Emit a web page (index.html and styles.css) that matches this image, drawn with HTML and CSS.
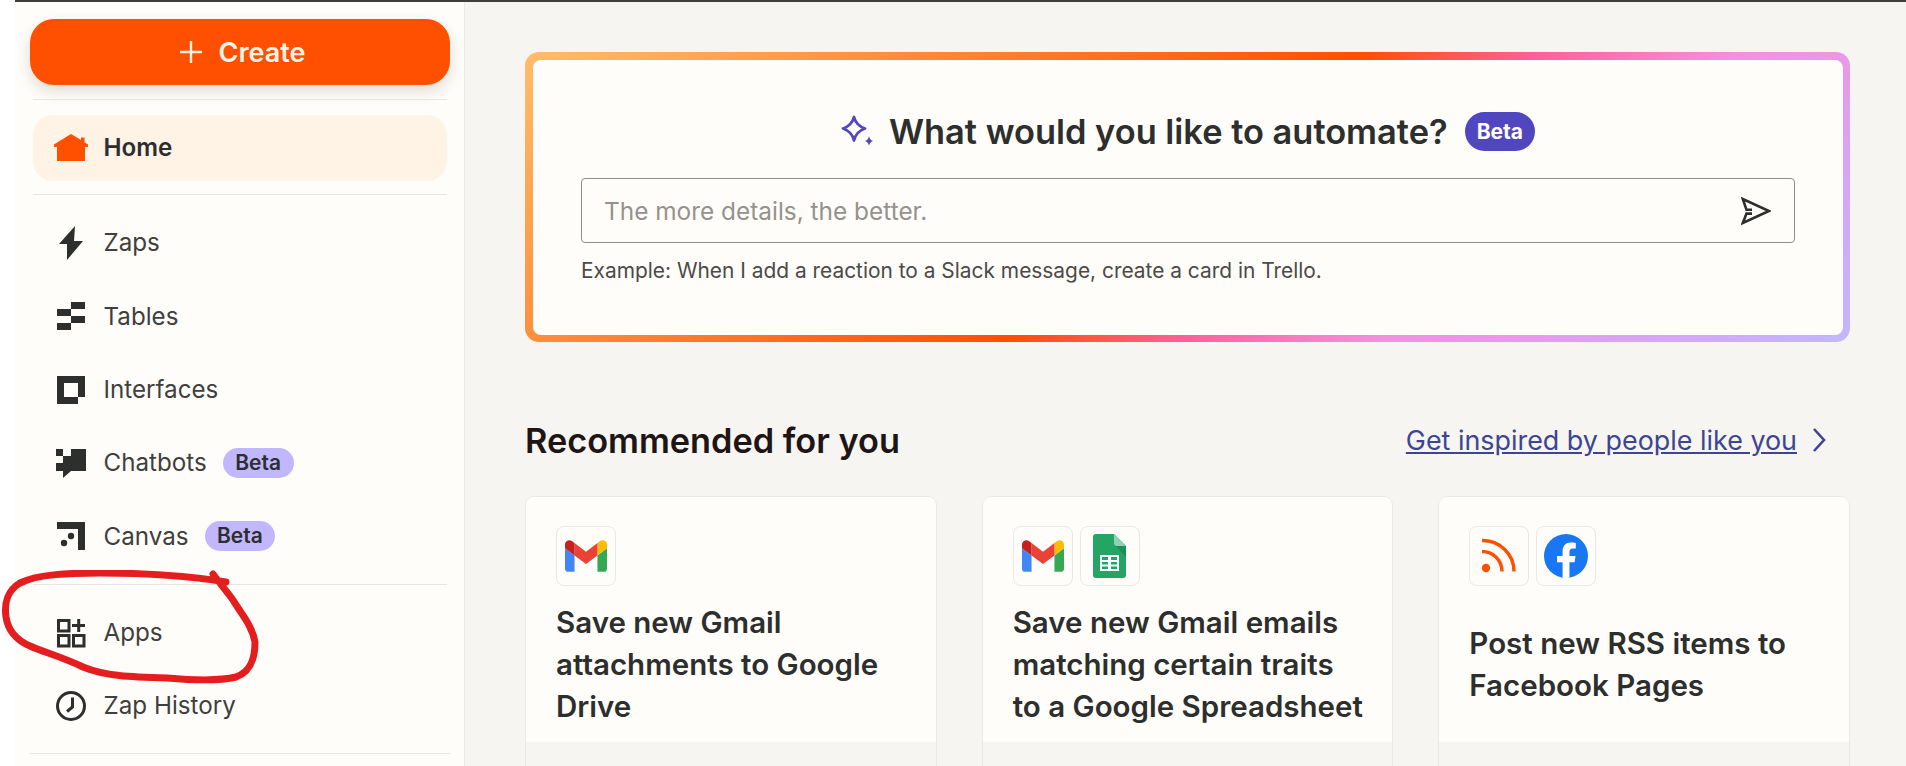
FILE: index.html

```html
<!DOCTYPE html>
<html lang="en">
<head>
  <meta charset="UTF-8">
  <title>Home - Zapier</title>
  <link rel="stylesheet" href="styles.css">
</head>
<body>
  <div class="topline"></div>
  <div class="app">
    <aside class="sidebar">
      <button class="create">
        <svg width="22" height="22" viewBox="0 0 22 22"><path d="M11 0V22M0 11H22" stroke="#fff3e6" stroke-width="2.4" fill="none"/></svg>
        <span>Create</span>
      </button>
      <div class="rule rule-create"></div>
      <a class="nav-item active">
        <svg class="nav-icon" viewBox="0 0 36 36"><path fill="#ff4f00" d="M18 4L28 10V7.5H31.5V12.2L35 14.6V17H32V31H4V17H1V14.6Z"/></svg>
        <span>Home</span>
      </a>
      <div class="rule rule-home"></div>
      <nav class="nav-group">
        <a class="nav-item">
          <svg class="nav-icon" viewBox="0 0 36 36"><path fill="#2d2e2e" d="M22 1L6 19H14L14 35L30 16H21Z"/></svg>
          <span>Zaps</span>
        </a>
        <a class="nav-item">
          <svg class="nav-icon" viewBox="0 0 36 36"><path fill="#2d2e2e" d="M18 4H32V11H18ZM4 11H18V18H4ZM18 18H32V25H18ZM4 25H18V32H4Z"/></svg>
          <span>Tables</span>
        </a>
        <a class="nav-item">
          <svg class="nav-icon" viewBox="0 0 36 36"><path fill="#2d2e2e" fill-rule="evenodd" d="M4 4H32V25H25V32H4ZM11 11V25H25V11Z"/></svg>
          <span>Interfaces</span>
        </a>
        <a class="nav-item">
          <svg class="nav-icon" viewBox="0 0 36 36"><path fill="#2d2e2e" d="M3 4H10V11H3ZM18 4H33V26H18L10 33V26H3V18H10V11H18Z"/></svg>
          <span>Chatbots</span>
          <em class="tag">Beta</em>
        </a>
        <a class="nav-item">
          <svg class="nav-icon" viewBox="0 0 36 36"><path fill="#2d2e2e" d="M4 4H32V32H25V11H4Z"/><circle cx="18" cy="18" r="3.2" fill="#2d2e2e"/><circle cx="11" cy="25" r="3.2" fill="#2d2e2e"/></svg>
          <span>Canvas</span>
          <em class="tag">Beta</em>
        </a>
      </nav>
      <div class="rule rule-canvas"></div>
      <nav class="nav-group">
        <a class="nav-item">
          <svg class="nav-icon" viewBox="0 0 36 36"><path fill="none" stroke="#2d2e2e" stroke-width="3" d="M5.5 5.5H16V16H5.5ZM5.5 20.5H16V31H5.5ZM20.5 20.5H31V31H20.5ZM25.7 4V17M19 10.5H32"/></svg>
          <span>Apps</span>
        </a>
        <a class="nav-item">
          <svg class="nav-icon" viewBox="0 0 36 36"><circle cx="18" cy="18" r="13.5" fill="none" stroke="#2d2e2e" stroke-width="3"/><path fill="none" stroke="#2d2e2e" stroke-width="3" d="M19.5 9.5V19L14 23.5"/></svg>
          <span>Zap History</span>
        </a>
      </nav>
      <div class="rule rule-bottom"></div>
    </aside>

    <main class="main">
      <section class="hero">
        <div class="hero-inner">
          <div class="hero-title">
            <svg class="sparkle" width="32" height="32" viewBox="0 0 32 32">
              <path fill="none" stroke="#5046c0" stroke-width="2.8" stroke-linejoin="round" d="M13 2C14.5 8 18 11.5 24 13.5C18 15.5 14.5 19 13 25.5C11.5 19 8 15.5 2 13.5C8 11.5 11.5 8 13 2Z"/>
              <path fill="#5046c0" d="M28 21C28.7 24 29.5 25 32 26C29.5 27 28.7 28 28 31C27.3 28 26.5 27 24 26C26.5 25 27.3 24 28 21Z"/>
            </svg>
            <h1>What would you like to automate?</h1>
            <span class="tag-dark">Beta</span>
          </div>
          <div class="prompt">
            <span class="placeholder">The more details, the better.</span>
            <svg width="30" height="30" viewBox="0 0 30 30"><path fill="none" stroke="#2d2e2e" stroke-width="2.6" d="M11 13.8H5.5L1.8 3L28 15L1.8 27L5.5 17.6H11"/></svg>
          </div>
          <p class="hint">Example: When I add a reaction to a Slack message, create a card in Trello.</p>
        </div>
      </section>

      <div class="section-head">
        <h2>Recommended for you</h2>
        <a class="more">
          <span>Get inspired by people like you</span>
          <svg width="16" height="26" viewBox="0 0 16 26"><path fill="none" stroke="#3d4592" stroke-width="2.6" d="M3 2L13 13L3 24"/></svg>
        </a>
      </div>

      <div class="cards">
        <article class="card">
          <div class="card-top">
            <div class="app-icons">
              <div class="app-icon">
                <svg width="42" height="32" viewBox="52 42 88 66"><path fill="#4285f4" d="M58 108h14V74L52 59v43c0 3.32 2.69 6 6 6"/><path fill="#34a853" d="M120 108h14c3.32 0 6-2.69 6-6V59l-20 15"/><path fill="#fbbc04" d="M120 48v26l20-15v-8c0-7.42-8.47-11.65-14.4-7.2"/><path fill="#ea4335" d="M72 74V48l24 18 24-18v26L96 92"/><path fill="#c5221f" d="M52 51v8l20 15V48l-5.6-4.2c-5.94-4.45-14.4-.22-14.4 7.2"/></svg>
              </div>
            </div>
            <h3>Save new Gmail attachments to Google Drive</h3>
          </div>
          <div class="card-foot"></div>
        </article>

        <article class="card">
          <div class="card-top">
            <div class="app-icons">
              <div class="app-icon">
                <svg width="42" height="32" viewBox="52 42 88 66"><path fill="#4285f4" d="M58 108h14V74L52 59v43c0 3.32 2.69 6 6 6"/><path fill="#34a853" d="M120 108h14c3.32 0 6-2.69 6-6V59l-20 15"/><path fill="#fbbc04" d="M120 48v26l20-15v-8c0-7.42-8.47-11.65-14.4-7.2"/><path fill="#ea4335" d="M72 74V48l24 18 24-18v26L96 92"/><path fill="#c5221f" d="M52 51v8l20 15V48l-5.6-4.2c-5.94-4.45-14.4-.22-14.4 7.2"/></svg>
              </div>
              <div class="app-icon">
                <svg width="33" height="44" viewBox="0 0 33 44"><path fill="#23a566" d="M3 0H21L33 12V41A3 3 0 0 1 30 44H3A3 3 0 0 1 0 41V3A3 3 0 0 1 3 0Z"/><path fill="#1e8e57" d="M21 10L33 23V12Z"/><path fill="#8ed1b1" d="M21 0L33 12H24A3 3 0 0 1 21 9Z"/><path fill="#fff" d="M7 21H26V37H7ZM9 23V26H15V23ZM18 23V26H24V23ZM9 28V30.5H15V28ZM18 28V30.5H24V28ZM9 32.5V35H15V32.5ZM18 32.5V35H24V32.5Z" fill-rule="evenodd"/></svg>
              </div>
            </div>
            <h3>Save new Gmail emails matching certain traits to a Google Spreadsheet</h3>
          </div>
          <div class="card-foot"></div>
        </article>

        <article class="card">
          <div class="card-top">
            <div class="app-icons">
              <div class="app-icon">
                <svg width="36" height="36" viewBox="0 0 36 36"><circle cx="5" cy="30" r="4.2" fill="#ff4f00"/><path fill="none" stroke="#ff4f00" stroke-width="3.4" d="M1 13.5C12 13.5 21 22 21 33.5M1 2.5C19 2.5 33 16 33 33.5"/></svg>
              </div>
              <div class="app-icon">
                <svg width="44" height="44" viewBox="0 0 24 24"><circle cx="12" cy="12" r="12" fill="#1877f2"/><path fill="#fff" d="M16.67 15.47 17.2 12H13.88V9.75c0-.95.46-1.87 1.96-1.87h1.51V4.93s-1.37-.23-2.68-.23c-2.74 0-4.53 1.66-4.53 4.66V12H7.08v3.47h3.05v8.39c.61.1 1.24.14 1.88.14s1.26-.05 1.88-.14v-8.39h2.8z"/></svg>
              </div>
            </div>
            <h3>Post new RSS items to Facebook Pages</h3>
          </div>
          <div class="card-foot"></div>
        </article>
      </div>
    </main>
  </div>

  <!-- red marker scribble round the Apps item -->
  <svg class="scribble" width="270" height="130" viewBox="0 570 270 130">
    <path fill="none" stroke="#e41e1e" stroke-width="7" stroke-linecap="round" stroke-linejoin="round" d="M226 582C190 576 140 573 100 573C70 573 38 574 20 583C8 590 4 603 6 617C8 630 16 640 30 646C43 652 60 656 83 667C105 676 130 677 167 678C190 680 220 681 236 677C250 672 255 660 255 642C252 625 240 612 233 600C227 592 222 586 213 574"/>
  </svg>
</body>
</html>
```

FILE: styles.css

```css
* {
  box-sizing: border-box;
}
html, body {
  height: 100%;
}
body {
  margin: 0;
  height: 766px;
  overflow: hidden;
  background: #fff;
  color: #2d2e2e;
  font-family: Inter, "Liberation Sans", sans-serif;
  position: relative;
}
h1, h2, h3, p {
  margin: 0;
}

.topline {
  height: 2px;
  margin-left: 15px;
  background: #3d403a;
}
.app {
  display: flex;
  height: 764px;
  margin-left: 15px;
}

/* sidebar */
.sidebar {
  flex: 0 0 450px;
  padding: 17px 14px 0 15px;
  background: #fffdf9;
  border-right: 1px solid #ebe9e5;
}
.create {
  display: flex;
  align-items: center;
  justify-content: center;
  gap: 17px;
  width: 100%;
  height: 66px;
  padding: 0 0 0 5px;
  border: none;
  border-radius: 24px;
  background: #ff4f00;
  color: #fff3e6;
  font-family: inherit;
  font-size: 27px;
  font-weight: 600;
  box-shadow: 0 6px 14px rgba(60, 40, 20, 0.16);
}
.rule {
  height: 1px;
  margin-left: 3px;
  margin-right: 3px;
  background: #e8e6e2;
}
.rule-create {
  margin-top: 14px;
  margin-bottom: 15px;
}
.rule-home {
  margin-top: 13px;
  margin-bottom: 14.8px;
}
.rule-canvas {
  margin-top: 14.2px;
  margin-bottom: 15px;
}
.rule-bottom {
  margin: 14px 0 0;
}
.nav-group {
  display: flex;
  flex-direction: column;
  gap: 7.4px;
}
.nav-item {
  display: flex;
  align-items: center;
  height: 66px;
  margin: 0 3px;
  padding-left: 20px;
  border-radius: 20px;
  font-size: 24.2px;
  color: #403f3e;
}
.nav-item.active {
  background: #fff3e6;
  color: #2d2e2e;
  font-weight: 600;
  padding-bottom: 1px;
}
.nav-icon {
  flex: 0 0 36px;
  width: 36px;
  height: 36px;
  margin-right: 14.5px;
}
.tag {
  margin-left: 16px;
  padding: 0 12.5px;
  height: 30px;
  line-height: 30px;
  border-radius: 15px;
  background: #c1b7ff;
  color: #2d2e2e;
  font-size: 21px;
  font-style: normal;
  font-weight: 600;
}

/* main column */
.main {
  flex: 1;
  min-width: 0;
  padding: 50px 56px 0 60px;
  background: #f7f5f2;
}
.hero {
  height: 290px;
  padding: 8px 7px 7px 8px;
  border-radius: 14px;
  background: linear-gradient(141deg, #ffbd6b 0%, #ff4f00 50%, #ff5f96 60%, #f58fe0 72%, #c1b7ff 100%);
}
.hero-inner {
  height: 100%;
  padding: 51px 48px 0;
  border-radius: 8px;
  background: #fffdf9;
}
.hero-title {
  display: flex;
  align-items: center;
  justify-content: center;
  height: 40px;
}
.sparkle {
  margin-right: 16px;
}
.hero-title h1 {
  font-size: 34.4px;
  font-weight: 600;
  color: #2d2e2e;
}
.tag-dark {
  margin-left: 17px;
  padding: 0 12px;
  height: 39px;
  line-height: 39px;
  border-radius: 20px;
  background: #5046c0;
  color: #fffdf9;
  font-size: 21px;
  font-weight: 700;
}
.prompt {
  display: flex;
  align-items: center;
  justify-content: space-between;
  height: 65px;
  margin-top: 27px;
  padding: 0 23px 0 22px;
  border: 1px solid #8f8d87;
  border-radius: 4px;
}
.placeholder {
  font-size: 24.4px;
  color: #95928e;
}
.hint {
  margin-top: 15px;
  font-size: 20.9px;
  line-height: 26px;
  color: #4b4a47;
}

.section-head {
  display: flex;
  align-items: center;
  justify-content: space-between;
  height: 40px;
  margin-top: 78px;
  margin-bottom: 36px;
}
.section-head h2 {
  font-size: 34.3px;
  font-weight: 600;
  color: #201515;
}
.more {
  display: flex;
  align-items: center;
  gap: 14px;
  padding-right: 23px;
  font-size: 26.9px;
  color: #3d4592;
  text-decoration: underline;
}

/* cards */
.cards {
  display: grid;
  grid-template-columns: repeat(3, 1fr);
  gap: 45px;
}
.card {
  height: 400px;
  border: 1px solid #ebe9e5;
  border-radius: 9px;
  overflow: hidden;
  background: #f7f5f2;
}
.card-top {
  display: flex;
  flex-direction: column;
  height: 245px;
  padding: 29px 29px 0 30px;
  background: #fffdf9;
}
.app-icons {
  display: flex;
  gap: 7px;
}
.app-icon {
  display: flex;
  align-items: center;
  justify-content: center;
  width: 60px;
  height: 60px;
  border: 1px solid #ebe9e5;
  border-radius: 8px;
  background: #fffdf9;
}
.card-top h3 {
  flex: 1;
  display: flex;
  align-items: center;
  font-size: 29.5px;
  font-weight: 600;
  line-height: 42px;
  color: #2d2e2e;
}

.scribble {
  position: absolute;
  left: 0;
  top: 570px;
}
```
